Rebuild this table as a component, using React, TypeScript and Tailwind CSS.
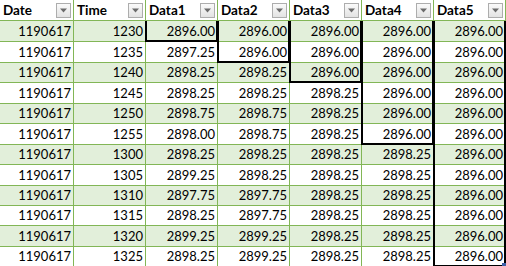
import React from "react";

const headers = ["Date", "Time", "Data1", "Data2", "Data3", "Data4", "Data5"];

const rows: string[][] = [
  ["1230", "2896.00", "2896.00", "2896.00", "2896.00", "2896.00"],
  ["1235", "2897.25", "2896.00", "2896.00", "2896.00", "2896.00"],
  ["1240", "2898.25", "2898.25", "2896.00", "2896.00", "2896.00"],
  ["1245", "2898.25", "2898.25", "2898.25", "2896.00", "2896.00"],
  ["1250", "2898.75", "2898.75", "2898.25", "2896.00", "2896.00"],
  ["1255", "2898.00", "2898.75", "2898.25", "2896.00", "2896.00"],
  ["1300", "2898.25", "2898.25", "2898.25", "2898.25", "2896.00"],
  ["1305", "2899.25", "2898.25", "2898.25", "2898.25", "2896.00"],
  ["1310", "2897.75", "2897.75", "2898.25", "2898.25", "2896.00"],
  ["1315", "2898.25", "2897.75", "2898.25", "2898.25", "2896.00"],
  ["1320", "2899.25", "2899.25", "2898.25", "2898.25", "2896.00"],
  ["1325", "2898.25", "2899.25", "2898.25", "2898.25", "2896.00"],
];

const rowHeights = [21, 21, 20, 21, 20, 21, 20, 21, 20, 20, 21, 20];
const boxEnd = [0, 1, 2, 5, 11];

function FilterButton() {
  return (
    <div className="w-[15px] h-[15px] mr-[2px] mb-[2px] shrink-0 border border-[#adadad] bg-gradient-to-b from-[#fafafa] to-[#e3e3e3] flex items-center justify-center">
      <svg width="9" height="5" viewBox="0 0 9 5">
        <polygon points="1,0.5 8,0.5 4.5,4.5" fill="#6b6b6b" />
      </svg>
    </div>
  );
}

export default function App() {
  return (
    <div
      className="w-[506px] h-[266px] overflow-hidden bg-white text-black text-[13px]"
      style={{ fontFamily: "Lato, 'Liberation Sans', sans-serif" }}
    >
      <div className="flex h-[21px]">
        {headers.map((h, i) => (
          <div
            key={h}
            className={`${i === 0 ? "w-[74px]" : "w-[72px]"} h-full border-r border-b border-[#82b656] flex items-end justify-between pl-[3px] font-bold text-[13.5px]`}
          >
            <span className="leading-none pb-[3px]">{h}</span>
            <FilterButton />
          </div>
        ))}
      </div>
      {rows.map((r, ri) => (
        <div
          key={ri}
          className={`flex ${rowHeights[ri] === 21 ? "h-[21px]" : "h-[20px]"} ${ri % 2 === 0 ? "bg-[#e2efda]" : "bg-white"}`}
        >
          <div className="w-[74px] h-full border-r border-b border-[#82b656] flex items-end justify-end pr-[2px]">
            <span className="leading-none pb-[3px]">1190617</span>
          </div>
          {r.map((v, ci) => {
            const k = ci - 1;
            const inBox = k >= 0 && ri <= boxEnd[k];
            const isBottom = k >= 0 && ri === boxEnd[k];
            return (
              <div
                key={ci}
                className="relative w-[72px] h-full border-r border-b border-[#82b656] flex items-end justify-end pr-[2px]"
              >
                <span className="leading-none pb-[3px]">{v}</span>
                {inBox && (
                  <>
                    <span className="absolute z-10 left-[-1px] top-0 bottom-[-1px] w-[2px] bg-black" />
                    <span className="absolute z-10 right-[-1px] top-0 bottom-[-1px] w-[2px] bg-black" />
                  </>
                )}
                {isBottom && (
                  <span className="absolute z-10 left-[-1px] right-[-1px] bottom-[-1px] h-[2px] bg-black" />
                )}
                {k === 4 && ri === 11 && (
                  <span className="absolute z-20 right-[-1px] bottom-[-1px] w-[4px] h-[4px] bg-[#3a5fa8]" />
                )}
              </div>
            );
          })}
        </div>
      ))}
    </div>
  );
}
